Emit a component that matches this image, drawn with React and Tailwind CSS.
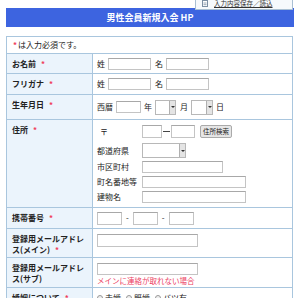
import React from "react";

const Req = () => <span className="text-[#f03c5a] ml-[5px] font-bold">*</span>;

const Input = ({ w, h = "h-[12px]" }) => (
  <span className={`inline-block ${w} ${h} border border-[#c4c4c4] border-t-[#a8a8a8] bg-white`} />
);

const Select = ({ w }) => (
  <span className={`inline-flex ${w} h-[15px] border border-[#b8b8b8] bg-white justify-end`}>
    <span className="w-[6px] h-full bg-[#e4e4e4] border-l border-[#b0b0b0] flex items-center justify-center">
      <span className="w-0 h-0 border-l-[2px] border-r-[2px] border-t-[2px] border-l-transparent border-r-transparent border-t-[#333]" />
    </span>
  </span>
);

const Row = ({ label, h, children, pt = "pt-[4px]" }) => (
  <div className={`flex border-t border-[#a9c6de] ${h}`}>
    <div className={`w-[86px] shrink-0 bg-[#ebf4fc] border-r border-[#a9c6de] pl-[5px] ${pt} font-bold leading-[11px] text-[#222]`}>
      {label}
    </div>
    <div className="flex-1 pl-[4px]">{children}</div>
  </div>
);

export default function App() {
  return (
    <div
      className="relative w-[300px] h-[298px] overflow-hidden bg-white text-[8px] text-[#222]"
      style={{ fontFamily: '"Noto Sans CJK JP", "Noto Sans", sans-serif' }}
    >
      <div className="pt-[8px] pl-[6px] pr-[6px]">
        <div className="h-[19px] bg-[#3d64e0] flex items-center justify-center text-white font-bold text-[9px]">
          男性会員新規入会 HP
        </div>
        <div className="mt-[9px] mr-[1px] border-l border-r border-t border-[#a9c6de]">
          <div className="h-[16px] flex items-center pl-[6px]">
            <span className="text-[#f03c5a] font-bold mr-[1px]">*</span>は入力必須です。
          </div>
          <Row label={<>お名前<Req /></>} h="h-[20px]">
            <div className="flex items-center h-full gap-[3px]">
              <span>姓</span>
              <Input w="w-[43px]" />
              <span className="ml-[1px]">名</span>
              <Input w="w-[43px]" />
            </div>
          </Row>
          <Row label={<>フリガナ<Req /></>} h="h-[21px]">
            <div className="flex items-center h-full gap-[3px]">
              <span>姓</span>
              <Input w="w-[43px]" />
              <span className="ml-[1px]">名</span>
              <Input w="w-[43px]" />
            </div>
          </Row>
          <Row label={<>生年月日<Req /></>} h="h-[25px]">
            <div className="flex items-center h-full gap-[3px]">
              <span>西暦</span>
              <Input w="w-[25px]" />
              <span>年</span>
              <Select w="w-[21px]" />
              <span className="ml-[1px]">月</span>
              <Select w="w-[22px]" />
              <span>日</span>
            </div>
          </Row>
          <Row label={<>住所<Req /></>} h="h-[88px]">
            <div className="grid grid-cols-[45px_1fr] pt-[5px] items-center gap-y-[3px]">
              <span className="pl-[3px]">〒</span>
              <div className="flex items-center h-[13px]">
                <Input w="w-[20px]" h="h-[13px]" />
                <span className="w-[7px] h-px bg-[#444] mx-[1px]" />
                <Input w="w-[24px]" h="h-[13px]" />
                <span className="ml-[5px] h-[13px] px-[2px] flex items-center bg-[#e6e6e6] border border-[#aaa] rounded-[2px] text-[6.5px] leading-none">
                  住所検索
                </span>
              </div>
              <span className="mt-[2px]">都道府県</span>
              <div className="mt-[2px] flex"><Select w="w-[44px]" /></div>
              <span>市区町村</span>
              <Input w="w-[81px]" />
              <span>町名番地等</span>
              <Input w="w-[104px]" />
              <span>建物名</span>
              <Input w="w-[104px]" />
            </div>
          </Row>
          <Row label={<>携帯番号<Req /></>} h="h-[21px]">
            <div className="flex items-center h-full gap-[3px]">
              <Input w="w-[25px]" h="h-[13px]" />
              <span className="mx-[1px]">-</span>
              <Input w="w-[25px]" h="h-[13px]" />
              <span className="mx-[1px]">-</span>
              <Input w="w-[25px]" h="h-[13px]" />
            </div>
          </Row>
          <Row label={<>登録用メールアドレ<br />ス(メイン)<Req /></>} h="h-[29px]">
            <div className="pt-[5px] flex">
              <Input w="w-[101px]" h="h-[13px]" />
            </div>
          </Row>
          <Row label={<>登録用メールアドレ<br />ス(サブ)</>} h="h-[30px]">
            <div className="pt-[5px] flex flex-col">
              <Input w="w-[101px]" h="h-[12px]" />
              <span className="text-[#ec3d62] text-[7.5px] leading-[10px] mt-[1px]">メインに連絡が取れない場合</span>
            </div>
          </Row>
          <Row label={<>婚姻について<Req /></>} h="h-[20px]">
            <div className="flex items-center pt-[4px] gap-[2px] leading-[11px]">
              <span className="w-[6px] h-[6px] rounded-full border border-[#999] bg-[#eee]" />
              <span className="mr-[3px]">未婚</span>
              <span className="w-[6px] h-[6px] rounded-full border border-[#999] bg-[#eee]" />
              <span className="mr-[3px]">既婚</span>
              <span className="w-[6px] h-[6px] rounded-full border border-[#999] bg-[#eee]" />
              <span>バツ有</span>
            </div>
          </Row>
        </div>
      </div>

      <div className="absolute left-[195px] top-[-3px] w-[98px] h-[13px] bg-[#f6f9fc] border border-[#a9bfd3] flex items-center pl-[6px] gap-[6px]">
        <svg width="6" height="7" viewBox="0 0 6 7">
          <rect x="0.5" y="0.5" width="5" height="6" fill="#fff" stroke="#7c8fa3" strokeWidth="1" />
          <line x1="1.5" y1="3" x2="4.5" y2="3" stroke="#7c8fa3" strokeWidth="0.8" />
          <line x1="1.5" y1="4.7" x2="4.5" y2="4.7" stroke="#7c8fa3" strokeWidth="0.8" />
        </svg>
        <span className="text-[6.5px] underline text-[#333] leading-none">入力内容保存／読込</span>
      </div>
    </div>
  );
}
